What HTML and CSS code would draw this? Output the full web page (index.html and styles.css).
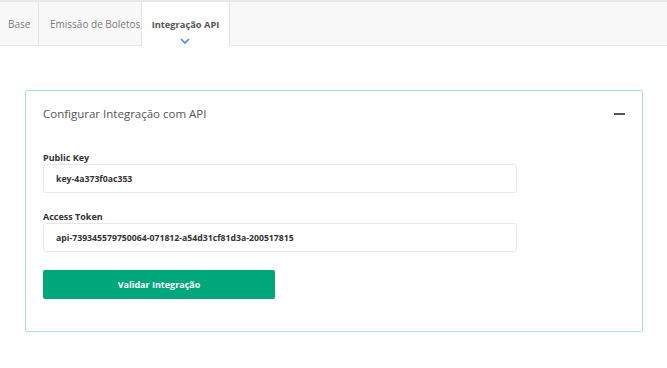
FILE: index.html
```html
<!DOCTYPE html>
<html>
<head>
<meta charset="utf-8">
<link rel="stylesheet" href="styles.css">
</head>
<body>
<div class="topstrip"></div>
<nav class="tabs">
  <div class="tab">Base</div>
  <div class="tab">Emissão de Boletos</div>
  <div class="tab active">Integração API
    <svg class="chev" width="10" height="6" viewBox="0 0 10 6"><path d="M1 1 L5 5 L9 1" fill="none" stroke="#3b8fe6" stroke-width="1.6"/></svg>
  </div>
</nav>
<main class="content">
  <section class="card">
    <header class="card-head">
      <h2>Configurar Integração com API</h2>
      <span class="minus"></span>
    </header>
    <div class="field">
      <label>Public Key</label>
      <div class="input">key-4a373f0ac353</div>
    </div>
    <div class="field">
      <label>Access Token</label>
      <div class="input">api-739345579750064-071812-a54d31cf81d3a-200517815</div>
    </div>
    <button class="btn">Validar Integração</button>
  </section>
</main>
</body>
</html>
```
FILE: styles.css
```css
* { box-sizing: border-box; margin: 0; padding: 0; }
body { font-family: "Open Sans", "Noto Sans", sans-serif; background: #fff; width: 667px; height: 368px; overflow: hidden; }
.topstrip { height: 2px; background: #e8e8ea; }
.tabs { display: flex; height: 44px; background: #f8f8f8; border-bottom: 1px solid #e6e9ec; }
.tab { white-space: nowrap; font-size: 10px; color: #7a7a7a; display: flex; align-items: center; height: 43px; border-right: 1px solid #e3e3e3; position: relative; padding: 0 11px; }
.tab:first-child { padding-left: 8px; width: 39px; }
.tab:nth-child(2) { width: 103px; }
.tab.active { background: #fff; height: 44px; font-size: 9.3px; font-weight: 700; color: #555; width: 88px; justify-content: center; padding: 0; }
.chev { position: absolute; left: 38px; top: 36px; }
.content { padding: 44px 25px 0 25px; }
.card { width: 618px; height: 242px; border: 1px solid #a9dcec; border-radius: 2px; padding: 0 17px; }
.card-head { display: flex; justify-content: space-between; align-items: center; height: 45px; }
.card-head h2 { font-size: 11.5px; font-weight: 400; color: #555; }
.minus { width: 11px; height: 2px; background: #555; }
.field { margin-top: 16px; }
.field + .field { margin-top: 18px; }
.field label { display: block; font-size: 9px; font-weight: 700; color: #333; height: 12px; line-height: 12px; }
.input { width: 474px; height: 29px; border: 1px solid #e6e6e6; border-radius: 3px; font-size: 8.7px; font-weight: 700; color: #333; padding-left: 12px; display: flex; align-items: center; }
.btn { margin-top: 18px; width: 232px; height: 29px; background: #00a77b; border: none; border-radius: 2px; color: #fff; font-family: inherit; font-size: 9px; font-weight: 700; display: block; }
```
